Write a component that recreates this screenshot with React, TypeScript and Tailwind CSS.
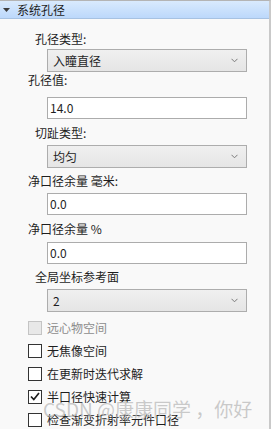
import React, { useState } from 'react';

const font = "font-['Microsoft_YaHei','Noto_Sans_CJK_SC',sans-serif]";

const Label: React.FC<{ text: string; indent?: boolean; className?: string }> = ({ text, indent, className }) => (
  <div className={`h-[16px] leading-[16px] text-[12px] text-[#1e1e1e] ${indent ? 'pl-[35px]' : 'pl-[28px]'} ${className ?? ''}`}>
    {text}
  </div>
);

const Select: React.FC<{ value: string; className?: string }> = ({ value, className }) => (
  <div
    className={`ml-[47px] w-[200px] h-[23px] flex items-center justify-between pl-[5px] pr-[8px] border border-[#adadad] bg-gradient-to-b from-[#f0f0f0] to-[#e5e5e5] text-[12px] text-[#1e1e1e] ${className ?? ''}`}
  >
    <span>{value}</span>
    <svg width="7" height="5" viewBox="0 0 7 5" fill="none">
      <path d="M0.5 0.8 L3.5 3.8 L6.5 0.8" stroke="#7a7a7a" strokeWidth="1" />
    </svg>
  </div>
);

const Input: React.FC<{ value: string; className?: string }> = ({ value, className }) => (
  <div
    className={`ml-[47px] w-[200px] h-[22px] flex items-center pl-[2px] border border-[#acacac] bg-white text-[12px] text-[#1e1e1e] ${className ?? ''}`}
  >
    {value}
  </div>
);

interface CheckItem {
  label: string;
  checked: boolean;
  disabled?: boolean;
}

const App: React.FC = () => {
  const [items] = useState<CheckItem[]>([
    { label: '远心物空间', checked: false, disabled: true },
    { label: '无焦像空间', checked: false },
    { label: '在更新时迭代求解', checked: false },
    { label: '半口径快速计算', checked: true },
    { label: '检查渐变折射率元件口径', checked: false },
  ]);

  return (
    <div className={`relative w-[271px] h-[429px] overflow-hidden bg-[#f9f9f9] border-t border-[#b4b4b4] border-r-2 border-r-[#c9c9c9] ${font}`}>
      {/* Header */}
      <div className="h-[18px] flex items-center bg-gradient-to-b from-[#d9eafd] to-[#bcd8fb] border-b border-[#a7c2e2]">
        <svg width="7" height="4" viewBox="0 0 7 4" className="ml-[3px]">
          <path d="M0 0 H7 L3.5 4 Z" fill="#3c3c3c" />
        </svg>
        <span className="ml-[7px] text-[12px] leading-[16px] text-[#1e1e1e]">系统孔径</span>
      </div>

      <Label text="孔径类型:" indent className="mt-[12px]" />
      <Select value="入瞳直径" className="mt-[2px]" />

      <Label text="孔径值:" className="mt-[0px]" />
      <Input value="14.0" className="mt-[9px]" />

      <Label text="切趾类型:" indent className="mt-[6px]" />
      <Select value="均匀" className="mt-[4px]" />

      <Label text="净口径余量 毫米:" className="mt-[5px]" />
      <Input value="0.0" className="mt-[4px]" />

      <Label text="净口径余量 %" className="mt-[6px]" />
      <Input value="0.0" className="mt-[5px]" />

      <Label text="全局坐标参考面" indent className="mt-[5px]" />
      <Select value="2" className="mt-[4px]" />

      {/* Checkboxes */}
      <div className="mt-[4px] flex flex-col">
        {items.map((item) => (
          <div key={item.label} className="h-[23px] flex items-center pl-[28px]">
            <div
              className={`w-[14px] h-[14px] flex items-center justify-center border ${
                item.disabled ? 'border-[#c4c4c4] bg-[#e8e8e8]' : 'border-[#333333] bg-white'
              }`}
            >
              {item.checked && (
                <svg width="10" height="9" viewBox="0 0 10 9" fill="none">
                  <path d="M1 4.5 L3.8 7.5 L9 1" stroke="#1e1e1e" strokeWidth="1.7" />
                </svg>
              )}
            </div>
            <span className={`ml-[5px] text-[12px] leading-[16px] ${item.disabled ? 'text-[#8c8c8c]' : 'text-[#1e1e1e]'}`}>
              {item.label}
            </span>
          </div>
        ))}
      </div>

      {/* Watermark */}
      <div className="absolute left-[43px] top-[396px] text-[19px] leading-[24px] whitespace-nowrap text-[rgba(185,185,185,0.75)] pointer-events-none">
        CSDN @康康同学 ，你好
      </div>
    </div>
  );
};

export default App;
